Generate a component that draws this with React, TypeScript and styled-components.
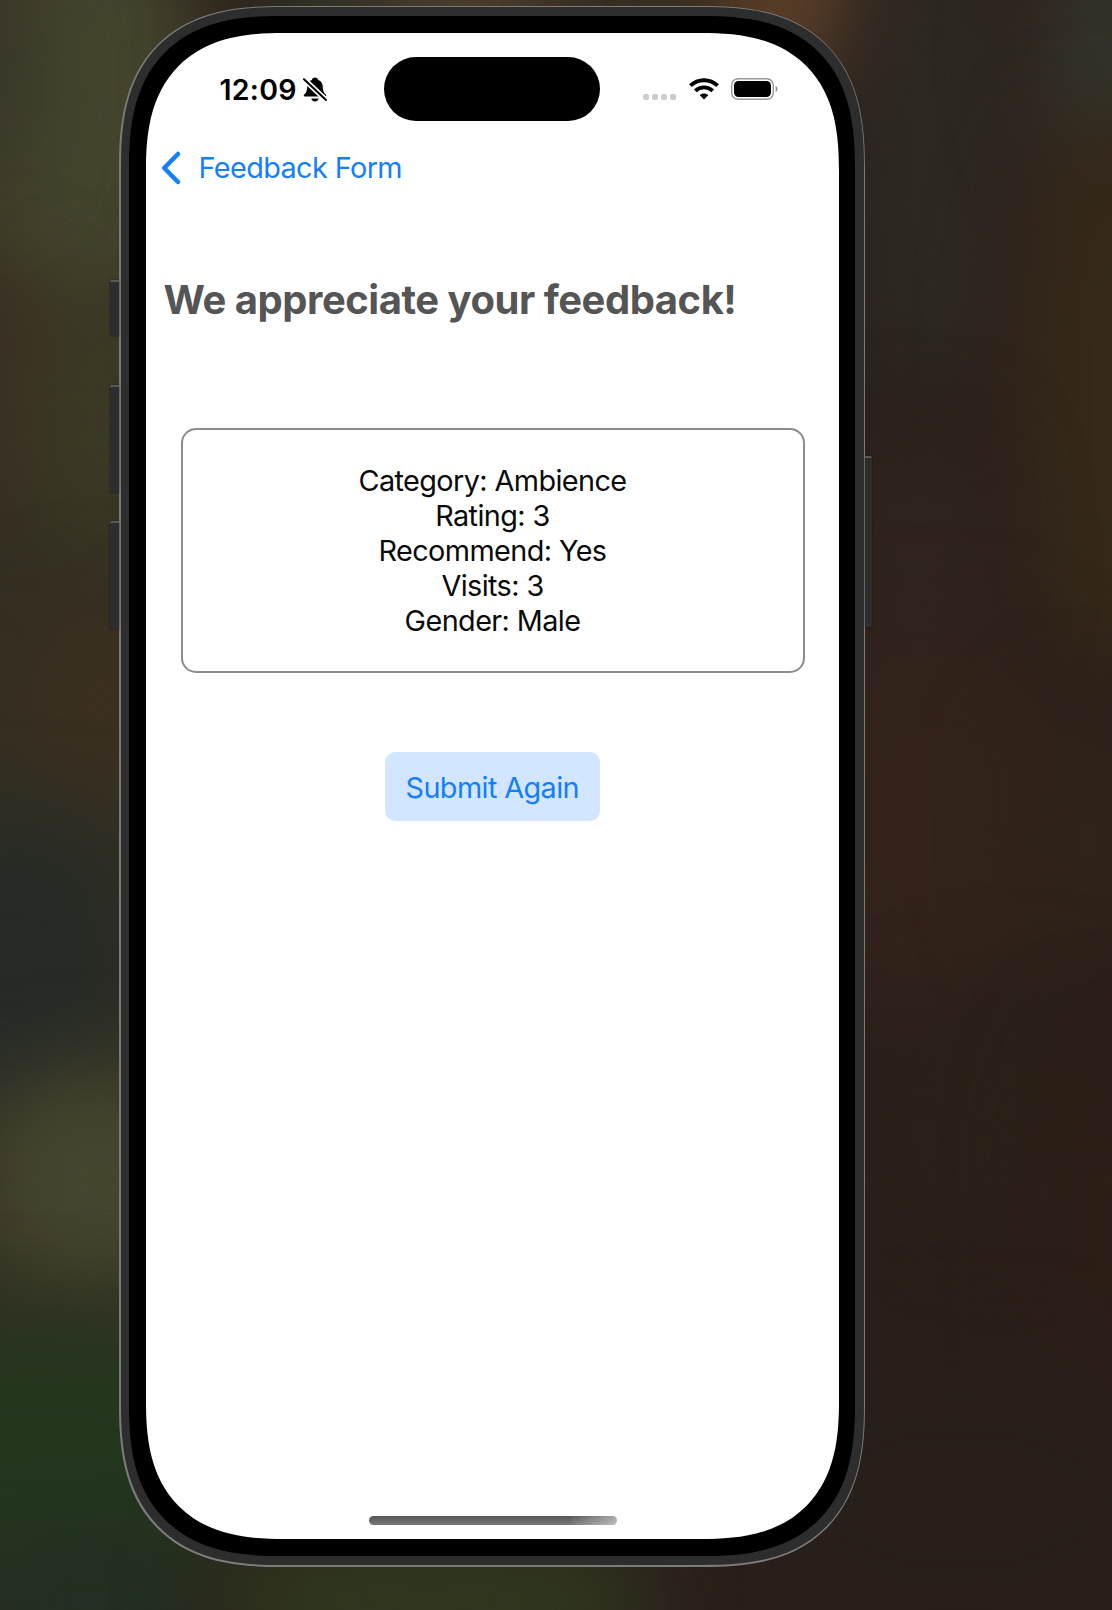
import React from 'react';
import styled, { createGlobalStyle } from 'styled-components';

const Global = createGlobalStyle`
  * { box-sizing: border-box; }
  body { margin: 0; font-family: Inter, "Liberation Sans", sans-serif; }
`;

const Wallpaper = styled.main`
  position: relative;
  width: 1112px;
  height: 1610px;
  padding: 5.5px 0 0 119px;
  overflow: hidden;
  background-color: #2a1f1a;
`;

/* Soft colour fields of the blurred desktop wallpaper */
const Field = styled.i<{ $x: number; $y: number; $w: number; $h: number; $c: string }>`
  position: absolute;
  left: ${p => p.$x - p.$w / 2}px;
  top: ${p => p.$y - p.$h / 2}px;
  width: ${p => p.$w}px;
  height: ${p => p.$h}px;
  border-radius: 40%;
  background: ${p => p.$c};
  filter: blur(45px);
`;

const fields = [
  { x: 60, y: 800, w: 400, h: 1700, c: '#332f22' },
  { x: 80, y: 110, w: 240, h: 420, c: '#45452d' },
  { x: -20, y: 60, w: 110, h: 260, c: '#383629' },
  { x: -10, y: 380, w: 140, h: 220, c: '#3a3024' },
  { x: 100, y: 420, w: 130, h: 260, c: '#3c3b25' },
  { x: 100, y: 700, w: 140, h: 200, c: '#3b3020' },
  { x: 10, y: 960, w: 240, h: 280, c: '#262b27' },
  { x: 100, y: 1180, w: 240, h: 210, c: '#46462f' },
  { x: 50, y: 1450, w: 340, h: 260, c: '#24361e' },
  { x: 90, y: 1600, w: 220, h: 130, c: '#203022' },
  { x: 430, y: 1600, w: 440, h: 140, c: '#30391f' },
  { x: 340, y: 0, w: 180, h: 100, c: '#343829' },
  { x: 480, y: 0, w: 200, h: 90, c: '#5b4a36' },
  { x: 640, y: 0, w: 120, h: 90, c: '#3d3b26' },
  { x: 790, y: 0, w: 160, h: 170, c: '#5f4229' },
  { x: 930, y: 160, w: 160, h: 480, c: '#2d2923' },
  { x: 1110, y: 60, w: 140, h: 240, c: '#34352a' },
  { x: 1110, y: 400, w: 190, h: 560, c: '#36291a' },
  { x: 920, y: 560, w: 150, h: 260, c: '#30251e' },
  { x: 930, y: 820, w: 300, h: 380, c: '#33231b' },
  { x: 1090, y: 840, w: 160, h: 260, c: '#30231a' },
  { x: 1010, y: 1110, w: 200, h: 240, c: '#2a2118' },
  { x: 1110, y: 1230, w: 130, h: 400, c: '#2d1e16' },
  { x: 960, y: 1500, w: 400, h: 300, c: '#281f1a' },
];

const Phone = styled.section`
  position: relative;
  width: 746px;
  height: 1561px;
  padding: 1.5px;
  background: #7b7b79;
  border-radius: 134px;
  @supports (corner-shape: squircle) { border-radius: 162px; corner-shape: superellipse(1.35); }
`;

const Metal = styled.div`
  height: 100%;
  padding: 9px 9px 9px 8.5px;
  background: #2d2d2d;
  border-radius: 132px;
  @supports (corner-shape: squircle) { border-radius: 160px; corner-shape: superellipse(1.35); }
`;

const Bezel = styled.div`
  height: 100%;
  padding: 17px 16px 17px 17px;
  background: #000;
  border-radius: 124px;
  @supports (corner-shape: squircle) { border-radius: 152px; corner-shape: superellipse(1.35); }
`;

const Screen = styled.div`
  display: flex;
  flex-direction: column;
  height: 100%;
  background: #fff;
  border-radius: 107px;
  @supports (corner-shape: squircle) { border-radius: 138px; corner-shape: superellipse(1.35); }
`;

const SideKey = styled.i<{ $top: number; $height: number; $right?: boolean }>`
  position: absolute;
  top: ${p => p.$top}px;
  ${p => (p.$right ? 'right: -7px' : 'left: -9px')};
  width: ${p => (p.$right ? 7 : 9)}px;
  height: ${p => p.$height}px;
  background: #2d2d2d;
  border-top: 2px solid #5a5a57;
  border-radius: ${p => (p.$right ? '0 2px 2px 0' : '2px 0 0 2px')};
  box-shadow: 0 0 2px #0009;
`;

const StatusBar = styled.header`
  display: grid;
  grid-template-columns: 238px 216px 1fr;
  height: 88px;
  padding-top: 24px;
`;

const StatusLeft = styled.div`
  display: flex;
  align-items: center;
  height: 64px;
  padding: 1px 0 0 73.5px;
  gap: 6.5px;
`;

const Time = styled.time`
  font-size: 28.5px;
  line-height: 36px;
  font-weight: 600;
  letter-spacing: 0.25px;
`;

const Island = styled.div`
  height: 63.5px;
  background: #000;
  border-radius: 32px;
`;

const StatusRight = styled.div`
  display: flex;
  align-items: center;
  height: 64px;
  padding-left: 42.5px;
`;

const Signal = styled.div`
  display: flex;
  gap: 3.3px;
  margin: 15px 12.2px 0 0;
`;

const Dot = styled.i`
  width: 6px;
  height: 6px;
  border-radius: 2px;
  background: #cbcbcb;
`;

const NavBar = styled.nav`
  display: flex;
  align-items: center;
  height: 92px;
  padding: 1px 0 0 15px;
  gap: 17.5px;
  color: #147efb;
`;

const Line = styled.span`
  font-size: 28.8px;
  line-height: 35px;
  letter-spacing: -0.59px;
  white-space: nowrap;
`;

const Title = styled.h1`
  margin: 63px 0 0 17.5px;
  font-size: 40px;
  line-height: 48px;
  font-weight: 700;
  letter-spacing: -0.48px;
  color: #555;
  white-space: nowrap;
`;

const Card = styled.div`
  display: flex;
  flex-direction: column;
  align-items: center;
  width: 624px;
  height: 245px;
  margin: 103.5px 0 0 34.5px;
  padding-top: 33px;
  border: 2px solid #8c8c8c;
  border-radius: 15px;
  color: #0a0a0a;
`;

const Submit = styled.button`
  align-self: center;
  display: flex;
  align-items: center;
  justify-content: center;
  width: 215px;
  height: 69px;
  margin-top: 79px;
  padding: 3px 0 0;
  border: 0;
  border-radius: 10px;
  background: #d2e6ff;
  color: #147efb;
  font-family: inherit;
`;

const HomeBar = styled.div`
  width: 248px;
  height: 9px;
  margin: auto 0 14px 223px;
  border-radius: 5px;
  background: linear-gradient(100deg, transparent 80%, #ffffff80), linear-gradient(#555, #7a7a7a);
`;

const BellOff = () => (
  <svg width="24" height="26" viewBox="0 0 24 26">
    <path d="M12 .5c-1.8 0-2.9 1-3.2 2.4C5.6 4 4.3 6.7 4.2 10c-.1 4-1 5.6-3 7.6-.9.9-.5 2 .8 2h20c1.3 0 1.7-1.1.8-2-2-2-2.9-3.6-3-7.6-.1-3.3-1.4-6-4.6-7.1C14.9 1.5 13.8.5 12 .5zM8.3 21.5h7.4c-.4 1.900-1.800 3-3.700 3s-3.300-1.100-3.700-3z" />
    <path d="M-1 .3 25 24.8" stroke="#fff" strokeWidth="5.4" />
    <path d="M1 2.2 23 23" stroke="#000" strokeWidth="2" strokeLinecap="round" />
  </svg>
);

const Wifi = () => (
  <svg width="30" height="22" viewBox="0 0 30 22">
    <g fill="none" stroke="#000" strokeWidth="3.9">
      <path d="M1.4 7.7C9 .4 21 .4 28.6 7.7" />
      <path d="M6.3 12.9c5-4.7 12.4-4.7 17.4 0" />
    </g>
    <path d="M15 21.4l-4.4-4.3c2.5-2.3 6.3-2.3 8.8 0z" />
  </svg>
);

const Battery = () => (
  <svg width="47" height="22" viewBox="0 0 47 22">
    <rect x=".7" y=".7" width="41.6" height="20.6" rx="6.5" fill="none" stroke="#999" strokeWidth="1.4" />
    <rect x="3" y="3" width="37" height="16" rx="4.5" />
    <path d="M44.7 8c2.3 1 2.3 5 0 6z" fill="#888" />
  </svg>
);

const Gap = styled.span`
  width: 12.5px;
`;

const summary = [
  'Category: Ambience',
  'Rating: 3',
  'Recommend: Yes',
  'Visits: 3',
  'Gender: Male',
];

export default function App() {
  return (
    <Wallpaper>
      <Global />
      {fields.map((f, i) => (
        <Field key={i} $x={f.x} $y={f.y} $w={f.w} $h={f.h} $c={f.c} />
      ))}
      <Phone>
        <SideKey $top={274} $height={56} />
        <SideKey $top={379} $height={108} />
        <SideKey $top={515} $height={108} />
        <SideKey $top={450} $height={171} $right />
        <Metal>
          <Bezel>
            <Screen>
              <StatusBar>
                <StatusLeft>
                  <Time>12:09</Time>
                  <BellOff />
                </StatusLeft>
                <Island />
                <StatusRight>
                  <Signal><Dot /><Dot /><Dot /><Dot /></Signal>
                  <Wifi />
                  <Gap />
                  <Battery />
                </StatusRight>
              </StatusBar>
              <NavBar>
                <svg width="20" height="34" viewBox="0 0 20 34">
                  <path d="M17 3 3.2 17 17 31" fill="none" stroke="currentColor" strokeWidth="4.5" strokeLinecap="round" strokeLinejoin="round" />
                </svg>
                <Line>Feedback Form</Line>
              </NavBar>
              <Title>We appreciate your feedback!</Title>
              <Card>
                {summary.map(s => <Line key={s}>{s}</Line>)}
              </Card>
              <Submit><Line>Submit Again</Line></Submit>
              <HomeBar />
            </Screen>
          </Bezel>
        </Metal>
      </Phone>
    </Wallpaper>
  );
}
